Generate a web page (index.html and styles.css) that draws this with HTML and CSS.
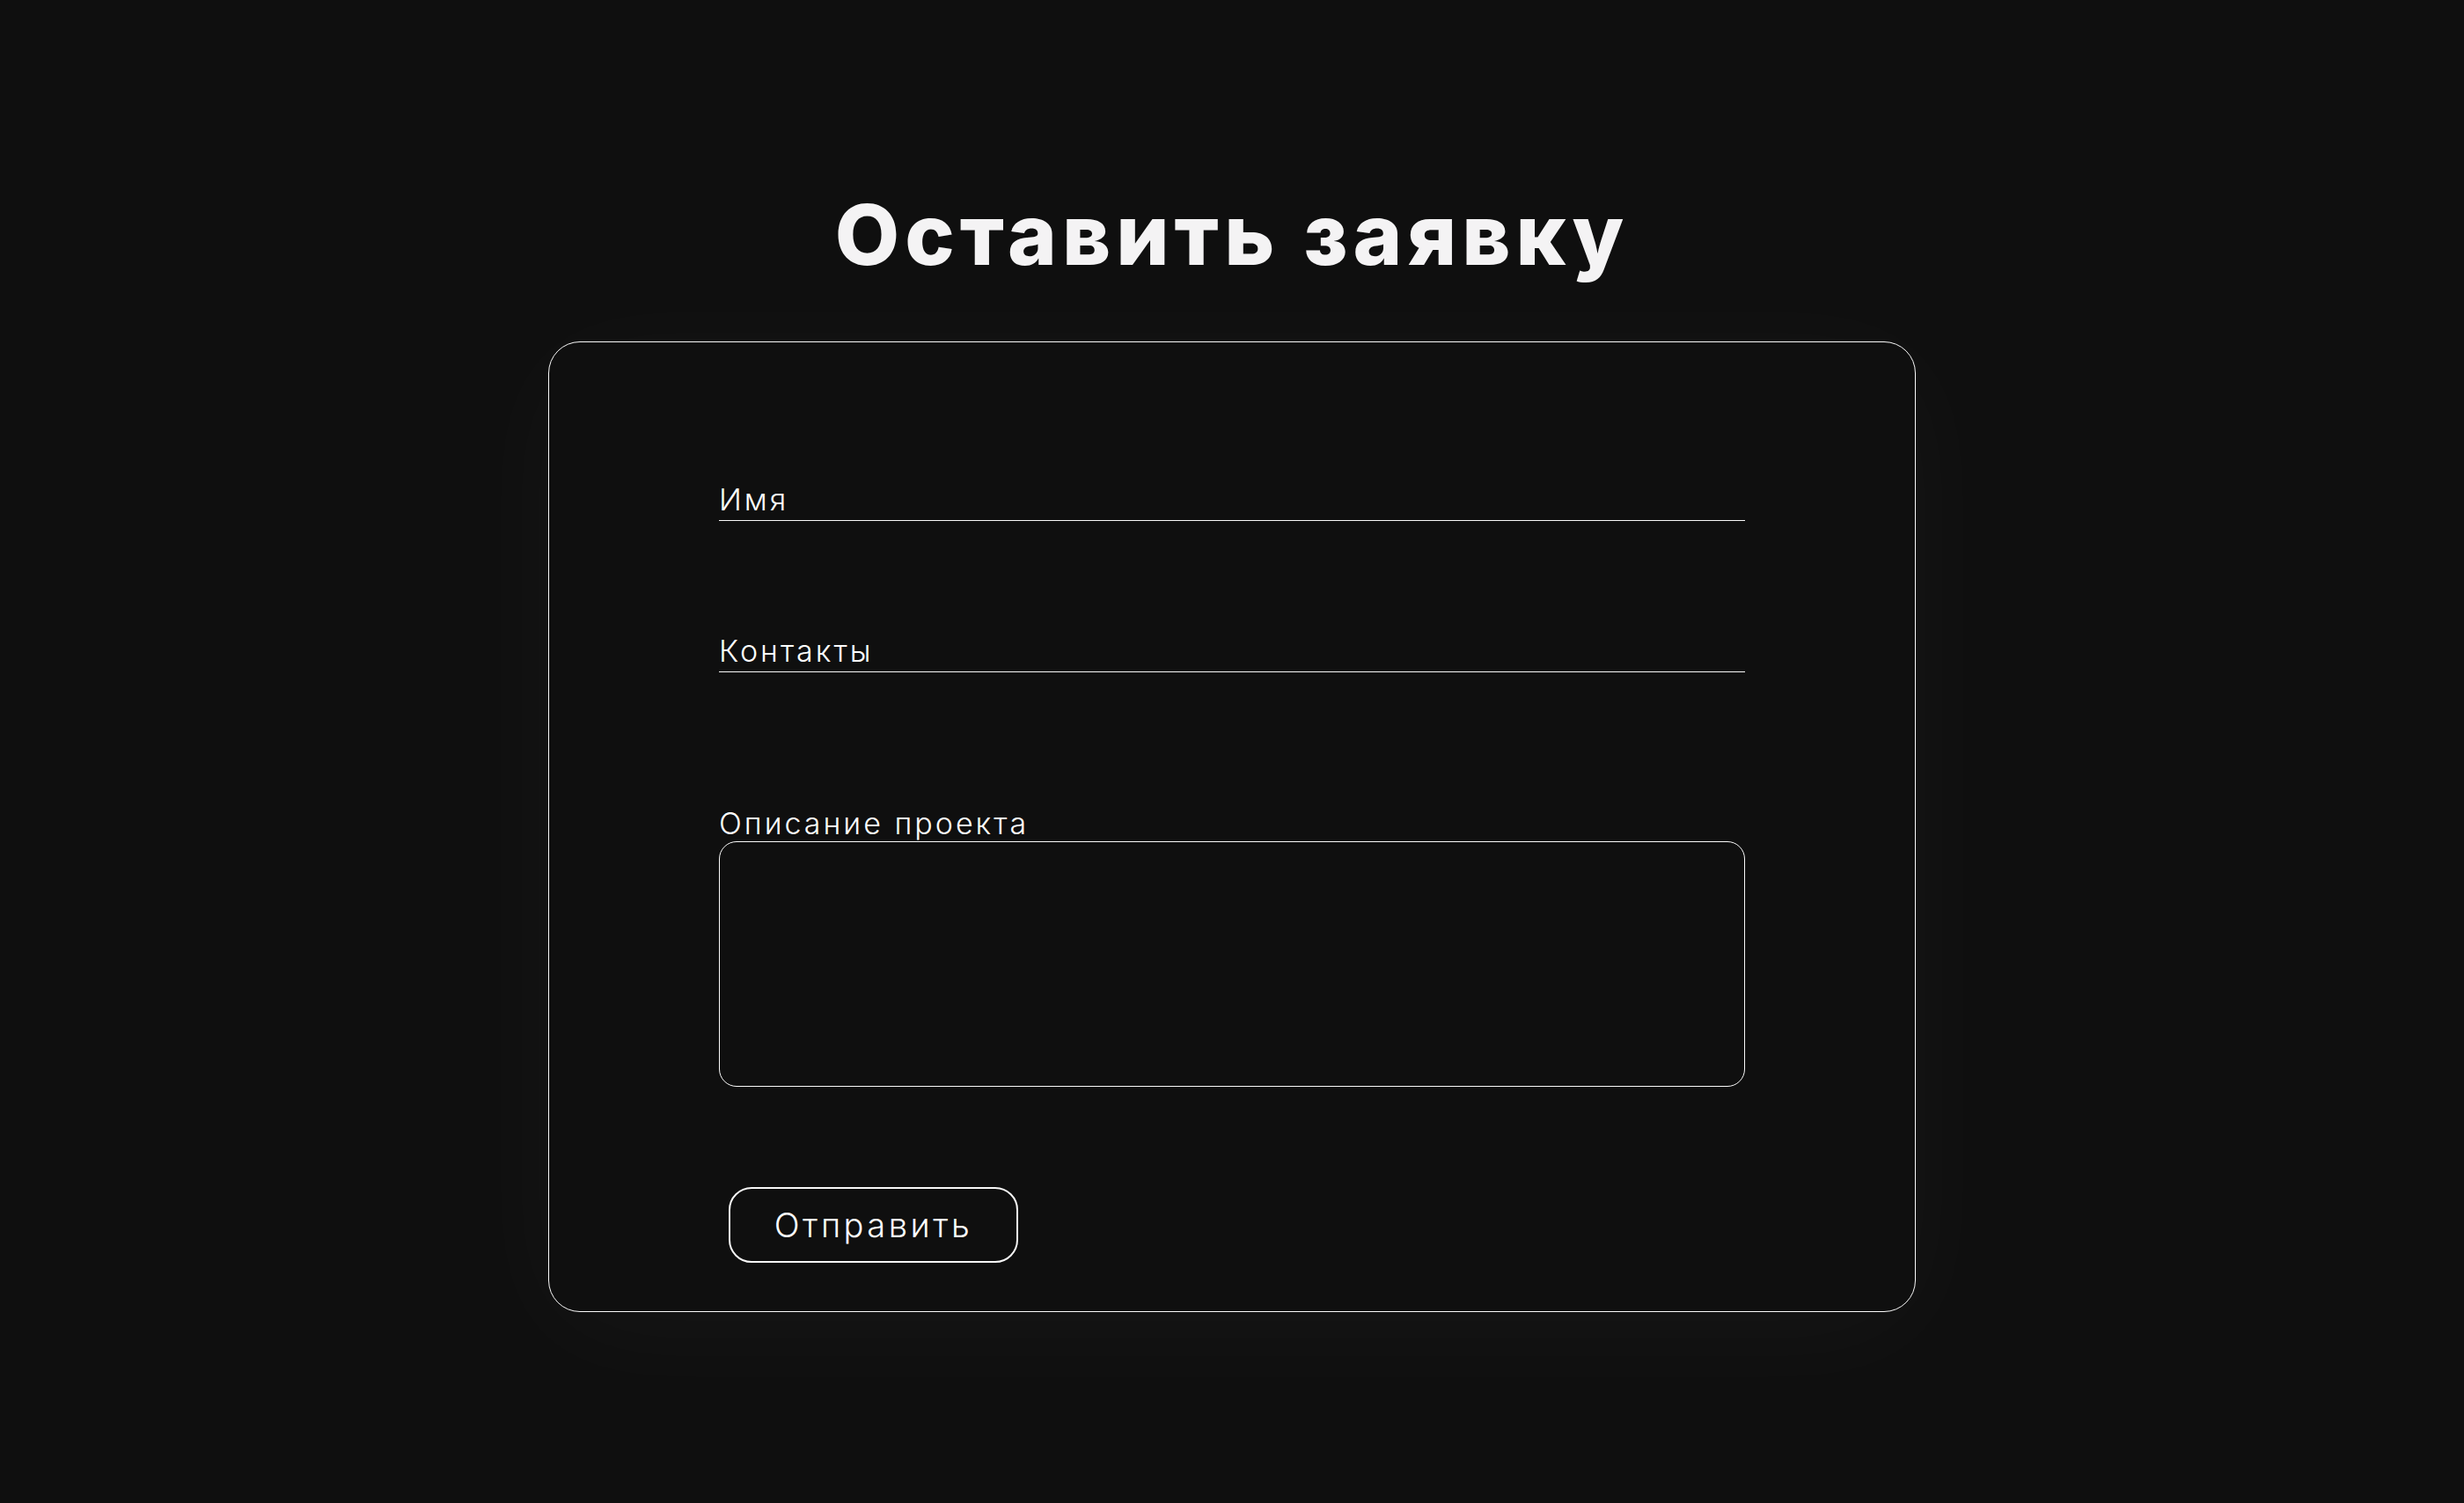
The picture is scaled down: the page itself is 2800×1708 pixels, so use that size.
FILE: index.html
```html
<!DOCTYPE html>
<html lang="ru">
<head>
    <meta charset="UTF-8">
    <meta name="viewport" content="width=device-width, initial-scale=1.0">
    <title>Оставить заявку</title>
    <link rel="stylesheet" href="styles.css">
</head>
<body>
    <div class="container">
        <h1>Оставить заявку</h1>

        <div class="request-card">
            <form id="request-form" class="request-form">
                <div class="form-group">
                    <label for="name">Имя</label>
                    <input type="text" id="name">
                </div>
                <div class="form-group">
                    <label for="contacts">Контакты</label>
                    <input type="text" id="contacts">
                </div>
                <div class="form-group form-group-area">
                    <label for="description">Описание проекта</label>
                    <textarea id="description"></textarea>
                </div>
                <button type="submit" class="submit-button">Отправить</button>
            </form>
        </div>
    </div>
</body>
</html>
```

FILE: styles.css
```css
* {
    margin: 0;
    padding: 0;
    box-sizing: border-box;
}

body {
    font-family: Inter, 'Noto Sans', sans-serif;
    background: #0f0f0f;
    color: #f4f3f4;
    min-height: 100vh;
}

.container {
    width: 1554px;
    margin: 0 auto;
    padding-top: 210px;
    padding-bottom: 100px;
}

h1 {
    text-align: center;
    font-size: 95px;
    font-weight: 800;
    line-height: 114px;
    letter-spacing: 6px;
    margin-bottom: 64px;
}

.request-card {
    border: 1.5px solid #fafafa;
    border-radius: 36px;
    padding: 159px 193px 55px;
    background: #0f0f0f;
    box-shadow: 0 20px 140px rgba(255,255,255,0.035);
}

.request-form {
    display: flex;
    flex-direction: column;
    gap: 128px;
}

.form-group {
    display: flex;
    flex-direction: column;
}

.form-group label {
    color: #fff;
    font-size: 34px;
    font-weight: 300;
    line-height: 40px;
    letter-spacing: 3px;
}

.form-group input {
    height: 4px;
    background: transparent;
    border: none;
    border-bottom: 1.5px solid #fafafa;
    outline: none;
}

.form-group-area {
    margin-top: 24px;
}

.form-group textarea {
    height: 279px;
    background: transparent;
    border: 1.5px solid #fafafa;
    border-radius: 20px;
    resize: none;
    outline: none;
    color: #f4f3f4;
}

.submit-button {
    align-self: flex-start;
    margin: -14px 0 0 11px;
    width: 329px;
    height: 86px;
    background: transparent;
    color: #fff;
    border: 2.5px solid #f6f6f6;
    border-radius: 26px;
    font-family: Inter, 'Noto Sans', sans-serif;
    font-size: 38px;
    font-weight: 300;
    letter-spacing: 3.5px;
    cursor: pointer;
}
```
